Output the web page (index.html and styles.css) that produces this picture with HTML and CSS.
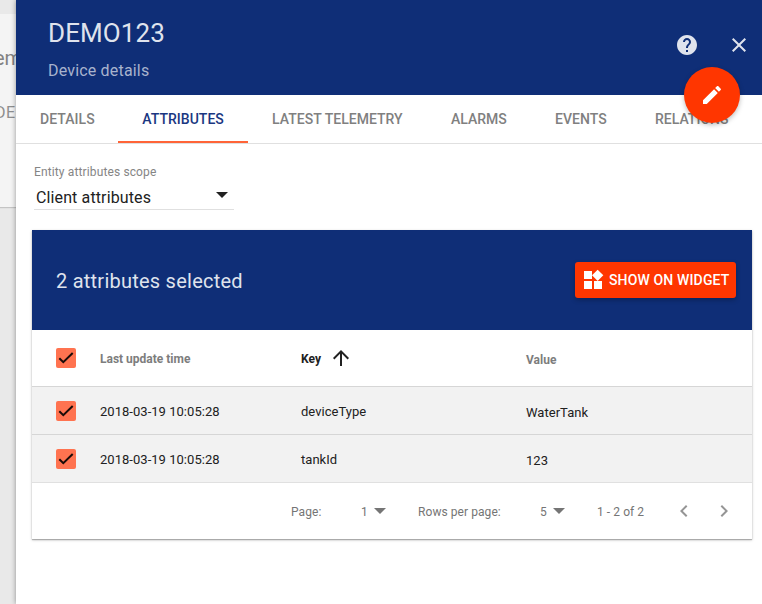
FILE: index.html
```html
<!DOCTYPE html>
<html lang="en">
<head>
<meta charset="utf-8">
<title>Device details</title>
<link rel="stylesheet" href="styles.css">
</head>
<body>
<div class="app">
  <aside class="backdrop">
    <div class="backdrop-card">
      <div class="backdrop-title">em</div>
      <div class="backdrop-sub">DE</div>
    </div>
  </aside>
  <main class="panel">
    <header class="header">
      <div class="heading">
        <h1 class="title">DEMO123</h1>
        <p class="subtitle">Device details</p>
      </div>
      <div class="header-actions">
        <svg class="icon" viewBox="0 0 24 24"><path d="M12 2C6.480 2 2 6.480 2 12s4.480 10 10 10 10-4.480 10-10S17.520 2 12 2zm1 17h-2v-2h2v2zm2.070-7.750l-.9.920C13.450 12.900 13 13.500 13 15h-2v-.5c0-1.100.45-2.100 1.170-2.830l1.240-1.260c.37-.36.59-.86.59-1.410 0-1.100-.9-2-2-2s-2 .9-2 2H8c0-2.210 1.790-4 4-4s4 1.790 4 4c0 .88-.36 1.680-.93 2.250z"/></svg>
        <svg class="icon" viewBox="0 0 24 24"><path d="M19 6.410L17.590 5 12 10.590 6.410 5 5 6.410 10.590 12 5 17.590 6.410 19 12 13.410 17.590 19 19 17.590 13.410 12z"/></svg>
      </div>
      <div class="fab"><svg class="fab-icon" viewBox="0 0 24 24"><path d="M3 17.250V21h3.750L17.810 9.940l-3.750-3.750L3 17.250zM20.710 7.040c.39-.39.39-1.020 0-1.410l-2.340-2.340c-.39-.39-1.020-.39-1.410 0l-1.830 1.830 3.750 3.750 1.830-1.830z"/></svg></div>
    </header>
    <nav class="tabs">
      <div class="tab">DETAILS</div>
      <div class="tab active">ATTRIBUTES</div>
      <div class="tab">LATEST TELEMETRY</div>
      <div class="tab">ALARMS</div>
      <div class="tab">EVENTS</div>
      <div class="tab">RELATIONS</div>
    </nav>
    <section class="scope">
      <div class="scope-label">Entity attributes scope</div>
      <div class="scope-select"><span>Client attributes</span><i class="caret"></i></div>
    </section>
    <section class="card">
      <div class="toolbar">
        <h2 class="selected">2 attributes selected</h2>
        <div class="button">
          <svg class="button-icon" viewBox="0 0 24 24"><path d="M13 13v8h8v-8h-8zM3 21h8v-8H3v8zM3 3v8h8V3H3zm13.660-1.310L11 7.340 16.660 13l5.660-5.660-5.660-5.650z"/></svg>
          <span>SHOW ON WIDGET</span>
        </div>
      </div>
      <div class="row head">
        <div class="check"><svg viewBox="0 0 20 20"><path d="M3.300 10.200l4 4L16.700 5"/></svg></div>
        <div class="cell">Last update time</div>
        <div class="sorted"><span class="cell">Key</span><svg class="arrow" viewBox="0 0 24 24"><path d="M4 12l1.410 1.410L11 7.830V20h2V7.830l5.580 5.590L20 12l-8-8-8 8z"/></svg></div>
        <div class="value">Value</div>
      </div>
      <div class="row item">
        <div class="check"><svg viewBox="0 0 20 20"><path d="M3.300 10.200l4 4L16.700 5"/></svg></div>
        <div class="cell">2018-03-19 10:05:28</div>
        <div class="cell">deviceType</div>
        <div class="value">WaterTank</div>
      </div>
      <div class="row item">
        <div class="check"><svg viewBox="0 0 20 20"><path d="M3.300 10.200l4 4L16.700 5"/></svg></div>
        <div class="cell">2018-03-19 10:05:28</div>
        <div class="cell">tankId</div>
        <div class="value">123</div>
      </div>
      <footer class="pager">
        <span class="page-label">Page:</span>
        <span class="page-select"><span class="cell">1</span><i class="caret"></i></span>
        <span class="rows-label">Rows per page:</span>
        <span class="rows-select"><span class="cell">5</span><i class="caret"></i></span>
        <span class="range">1 - 2 of 2</span>
        <svg class="chevron" viewBox="0 0 24 24"><path d="M15.410 7.410L14 6l-6 6 6 6 1.410-1.410L10.830 12z"/></svg>
        <svg class="chevron" viewBox="0 0 24 24"><path d="M10 6L8.590 7.410 13.170 12l-4.580 4.590L10 18l6-6z"/></svg>
      </footer>
    </section>
  </main>
</div>
</body>
</html>
```
FILE: styles.css
```css
* { box-sizing: border-box; }
body {
  margin: 0;
  font-family: Roboto, "Liberation Sans", sans-serif;
  color: #212121;
  overflow: hidden;
}
h1, h2, p { margin: 0; font-weight: 400; }
svg { display: block; fill: currentColor; flex: none; }
.app { display: flex; width: 762px; height: 604px; overflow: hidden; background: #e9e9e9; }
.backdrop { width: 16px; flex: none; padding-top: 14px; overflow: hidden; white-space: nowrap; }
.backdrop-card {
  height: 193px;
  padding-top: 32px;
  background: #f4f4f4;
  box-shadow: 0 1px 1px #c4c4c4;
  color: #828282;
}
.backdrop-title { margin-left: -6px; font-size: 20px; line-height: 24px; }
.backdrop-sub { margin-left: -5px; margin-top: 33px; font-size: 16px; line-height: 20px; letter-spacing: .5px; color: #8e8e8e; }
.panel { width: 746px; flex: none; background: #fff; box-shadow: 0 0 5px rgba(0, 0, 0, .4); position: relative; }

.header {
  position: relative;
  display: flex;
  justify-content: space-between;
  height: 95px;
  padding: 17px 11px 0 32px;
  background: #0f2e77;
  color: #dfe3ed;
}
.title { font-size: 26px; line-height: 32px; letter-spacing: .1px; }
.subtitle { margin-top: 12px; font-size: 16px; line-height: 20px; letter-spacing: .18px; color: #a8b3cd; }
.header-actions { display: flex; gap: 28px; padding-top: 16px; }
.icon { width: 24px; height: 24px; }
.fab {
  position: absolute;
  right: 22px;
  top: 67px;
  z-index: 2;
  display: grid;
  place-items: center;
  width: 56px;
  height: 56px;
  border-radius: 50%;
  background: #ff3600;
  color: #fff;
  box-shadow: 0 2px 5px rgba(0, 0, 0, .26);
}
.fab-icon { width: 24px; height: 24px; }

.tabs { display: flex; height: 49px; border-bottom: 1px solid #e0e0e0; overflow: hidden; }
.tab {
  flex: none;
  height: 48px;
  padding: 0 24.100px;
  font-size: 14px;
  font-weight: 500;
  line-height: 49px;
  letter-spacing: .03px;
  color: #808080;
}
.tab:first-child { padding-right: 23.500px; }
.tab.active { color: #1a3781; border-bottom: 2px solid #ff6437; }

.scope { width: 200px; margin: 20px 0 0 18px; }
.scope-label { font-size: 12px; line-height: 16px; letter-spacing: .13px; color: #858585; }
.scope-select {
  display: flex;
  justify-content: space-between;
  height: 30px;
  padding: 5px 6.500px 0 2px;
  border-bottom: 1px solid #e0e0e0;
  font-size: 16px;
  line-height: 26px;
  letter-spacing: .12px;
}
.caret {
  width: 0;
  height: 0;
  border: 6px solid transparent;
  border-top: 6px solid currentColor;
  border-bottom: 0;
}
.scope-select .caret { margin-top: 7px; }

.card {
  width: 720px;
  height: 309px;
  margin: 20px 0 0 16px;
  box-shadow: 0 1px 3px rgba(0, 0, 0, .2), 0 1px 1px rgba(0, 0, 0, .24);
}
.toolbar {
  display: flex;
  align-items: center;
  justify-content: space-between;
  height: 100px;
  padding: 0 16px 0 24px;
  background: #0f2e77;
  color: #dfe3ed;
}
.selected { font-size: 20px; line-height: 24px; letter-spacing: .24px; padding-top: 2px; }
.button {
  display: flex;
  align-items: center;
  gap: 4px;
  width: 161px;
  height: 36px;
  padding-left: 6px;
  border-radius: 3px;
  background: #ff3600;
  color: #fff;
  font-size: 14px;
  font-weight: 500;
  letter-spacing: .14px;
  white-space: nowrap;
  box-shadow: 0 2px 5px rgba(0, 0, 0, .26);
}
.button-icon { width: 24px; height: 24px; }

.row {
  display: grid;
  grid-template-columns: 44px 201px 225px 1fr;
  align-items: center;
  padding-left: 24px;
  height: 48px;
  font-size: 13px;
}
.head { height: 56px; font-size: 12px; font-weight: 700; color: #7d7d7d; }
.item { border-top: 1px solid #d6d6d6; background: #f2f2f2; letter-spacing: .03px; }
.sorted { display: flex; align-items: center; color: #212121; }
.arrow { width: 24px; height: 24px; margin-left: 8px; }
.cell { padding-top: 2px; }
.value { padding-top: 4px; }
.check { width: 20px; height: 20px; border-radius: 2px; background: #ff7350; }
.check svg { width: 20px; height: 20px; fill: none; stroke: #1b0c08; stroke-width: 2; }

.pager {
  display: flex;
  align-items: center;
  height: 57px;
  padding-left: 259px;
  border-top: 1px solid #e0e0e0;
  font-size: 12px;
  letter-spacing: .07px;
  color: #757575;
  white-space: nowrap;
}
.page-label, .rows-label, .range { padding-top: 2px; }
.page-label { width: 70px; }
.page-select, .rows-select { display: flex; align-items: center; gap: 6px; }
.page-select { width: 57px; }
.rows-label { width: 122px; }
.rows-select { width: 57px; }
.range { width: 75px; }
.chevron { width: 24px; height: 24px; margin-right: 16px; color: #959595; }
```
